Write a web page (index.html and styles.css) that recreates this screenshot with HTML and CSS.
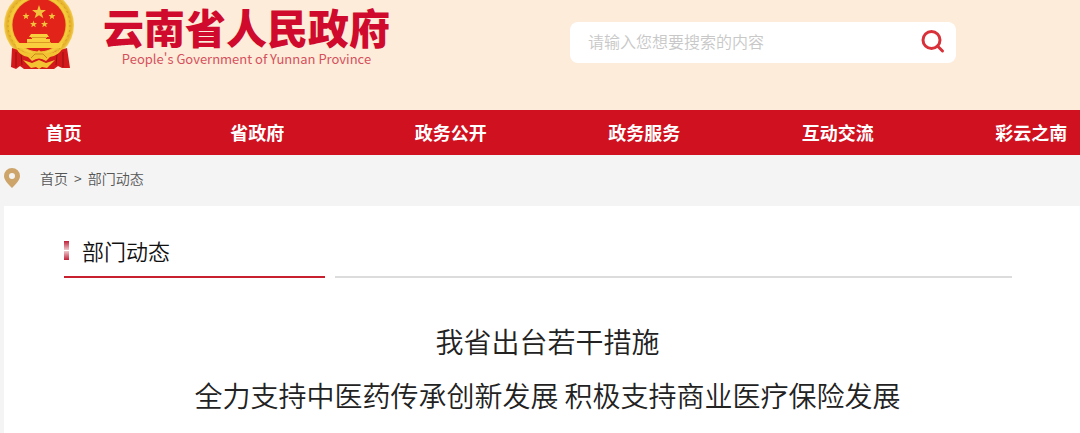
FILE: index.html
```html
<!DOCTYPE html>
<html lang="zh-CN">
<head>
  <meta charset="UTF-8">
  <title>云南省人民政府</title>
  <meta name="viewport" content="width=device-width,initial-scale=1">
  <link rel="stylesheet" href="styles.css">
</head>
<body>
  <header class="header">
    <a class="logo" href="#">
      <svg class="emblem" viewBox="0 0 72 78" aria-hidden="true">
        <defs>
          <radialGradient id="gold" cx="50%" cy="50%" r="50%">
            <stop offset="74%" stop-color="#d9a02a"/>
            <stop offset="80%" stop-color="#f7cf3c"/>
            <stop offset="92%" stop-color="#e6b12c"/>
            <stop offset="100%" stop-color="#f3cf52"/>
          </radialGradient>
        </defs>
        <!-- wreath and field -->
        <circle cx="35" cy="33" r="35" fill="url(#gold)"/>
        <circle cx="35" cy="33" r="31" fill="none" stroke="#d29a22" stroke-width="1" stroke-dasharray="2 3"/>
        <circle cx="35" cy="33" r="26.500" fill="#e2231a"/>
        <!-- stars -->
        <g fill="#f3c23c">
          <path d="M35 13 L36.700 18 L42 18 L37.800 21.200 L39.400 26.200 L35 23.200 L30.600 26.200 L32.200 21.200 L28 18 L33.300 18 Z"/>
          <path d="M22 20.500 L22.900 23 L25.500 23 L23.500 24.700 L24.200 27.200 L22 25.700 L19.800 27.200 L20.500 24.700 L18.500 23 L21.100 23 Z"/>
          <path d="M48 20.500 L48.900 23 L51.500 23 L49.500 24.700 L50.200 27.200 L48 25.700 L45.800 27.200 L46.500 24.700 L44.500 23 L47.100 23 Z"/>
          <path d="M29.500 28.500 L30.400 31 L33 31 L31 32.700 L31.700 35.200 L29.500 33.700 L27.300 35.200 L28 32.700 L26 31 L28.600 31 Z"/>
          <path d="M40.500 28.500 L41.400 31 L44 31 L42 32.700 L42.700 35.200 L40.500 33.700 L38.300 35.200 L39 32.700 L37 31 L39.600 31 Z"/>
        </g>
        <!-- gate -->
        <path fill="#f9cf3e" d="M27 42 H43 L45 45 H42 V47 H46 V51 H59 L57 56 H13 L11 51 H23 V47 H28 V45 H25 Z"/>
        <path stroke="#dc9a24" stroke-width="1" fill="none" d="M27 45.500 H43 M23 50.500 H47"/>
        <!-- ribbons -->
        <path fill="#d4191b" d="M8 56 L20 60 L30 66 H40 L50 60 L63 56 L66 76 L58 76 L54 74 L50 77 H20 L16 74 L12 77 L7 75 Z"/>
        <path stroke="#98100f" stroke-width="1" fill="none" d="M12 60 L12 75 M17 62 L18 73 M53 62 L52 73 M59 60 L59 75"/>
        <!-- gear and bow -->
        <path fill="#f2c233" d="M12 56 Q21 61 27 62 L30 59 L33 60 L35 58 L37 60 L40 59 L43 62 Q50 61 59 56 Q54 64 46 65 L42 69 Q35 64 28 69 L24 65 Q16 64 12 56 Z"/>
        <path stroke="#c8891b" stroke-width="1" fill="none" d="M27 66 L31 62 H39 L43 66"/>
        <path fill="#f2c233" d="M19 68 L28 71 L35 68 L42 71 L51 68 L46 73 L43 76 L38 75 L35 77 L32 75 L27 76 L24 73 Z"/>
      </svg>
      <span class="logo-text">
        <span class="logo-cn">云南省人民政府</span>
        <span class="logo-en">People's Government of Yunnan Province</span>
      </span>
    </a>
    <form class="search">
      <input class="search-input" type="text" aria-label="搜索" placeholder="请输入您想要搜索的内容">
      <button class="search-btn" type="submit" aria-label="搜索">
        <svg class="search-icon" viewBox="0 0 24 24" aria-hidden="true">
          <circle cx="10.500" cy="10" r="8.500"/>
          <path d="M16.500 16 L21.500 21"/>
        </svg>
      </button>
    </form>
  </header>

  <nav class="nav">
    <ul class="nav-list">
      <li><a href="#">首页</a></li>
      <li><a href="#">省政府</a></li>
      <li><a href="#">政务公开</a></li>
      <li><a href="#">政务服务</a></li>
      <li><a href="#">互动交流</a></li>
      <li><a href="#">彩云之南</a></li>
    </ul>
  </nav>

  <div class="crumbs">
    <svg class="pin" viewBox="0 0 16 20" aria-hidden="true">
      <path fill-rule="evenodd" d="M8 0 A8 8 0 0 1 16 8 C16 12 12 16 8 20 C4 16 0 12 0 8 A8 8 0 0 1 8 0 Z M8 5 A3 3 0 0 0 8 11 A3 3 0 0 0 8 5 Z"/>
    </svg>
    <a href="#">首页</a>
    <span class="sep">&gt;</span>
    <a href="#">部门动态</a>
  </div>

  <main class="panel">
    <div class="section-head">
      <h2 class="section-title">部门动态</h2>
      <div class="section-line"></div>
    </div>
    <h1 class="article-title">我省出台若干措施<br>全力支持中医药传承创新发展 积极支持商业医疗保险发展</h1>
  </main>
</body>
</html>
```
FILE: styles.css
```css
* { box-sizing: border-box; }
body {
  margin: 0;
  background: #f4f4f4;
  font-family: "Noto Sans CJK SC", sans-serif;
  color: #222;
}
a { color: inherit; text-decoration: none; }

.header {
  display: flex;
  align-items: flex-start;
  justify-content: space-between;
  height: 110px;
  padding-right: 124px;
  background: #fdecda;
}
.logo { display: flex; padding-left: 4px; }
.emblem { width: 72px; height: 78px; margin-top: -8px; }
.logo-text {
  display: flex;
  flex-direction: column;
  align-items: center;
  margin-left: 27px;
}
.logo-cn {
  font-size: 41px;
  font-weight: 900;
  line-height: 52px;
  color: #cf0a2c;
}
.logo-en { font-size: 13px; line-height: 14px; color: #d6505c; }

.search {
  display: flex;
  width: 386px;
  height: 41px;
  margin-top: 22px;
  background: #fff;
  border-radius: 8px;
}
.search-input {
  flex: 1;
  min-width: 0;
  padding: 0 18px 4px;
  border: 0;
  background: none;
  font-family: inherit;
  font-size: 16px;
  outline: none;
}
.search-input::placeholder { color: #c8c8c8; font-weight: 350; }
.search-btn {
  display: flex;
  align-items: center;
  padding: 0 11px 2px;
  border: 0;
  background: none;
  cursor: pointer;
}
.search-icon {
  width: 24px; height: 24px;
  fill: none;
  stroke: #d8313a;
  stroke-width: 3;
  stroke-linecap: round;
}

.nav { background: #d01120; overflow: hidden; }
.nav-list {
  display: grid;
  grid-template-columns: repeat(6, 1fr);
  width: 107.5%;
  margin: 0 0 0 -33px;
  padding: 0;
  list-style: none;
  text-align: center;
}
.nav-list a {
  display: block;
  font-size: 18px;
  font-weight: 700;
  line-height: 45px;
  color: #fff;
}

.crumbs {
  display: flex;
  align-items: center;
  height: 51px;
  padding: 0 4px 6px;
  font-size: 14px;
  font-weight: 350;
  color: #555;
}
.pin { width: 16px; height: 20px; margin-right: 20px; fill: #cda56a; }
.sep { margin: 0 6px; }

.panel {
  margin-left: 4px;
  padding: 26px 0 24px;
  background: #fff;
}
.section-head {
  display: flex;
  align-items: flex-end;
  gap: 10px;
  margin: 0 68px 0 60px;
}
.section-title {
  display: flex;
  align-items: center;
  width: 261px;
  margin: 0;
  padding-bottom: 8px;
  border-bottom: 2px solid #c8202f;
  font-size: 22px;
  font-weight: 350;
  line-height: 36px;
  color: #111;
}
.section-title::before {
  content: "";
  width: 5px; height: 19px;
  margin-right: 13px;
  background: linear-gradient(#c01f38, #ecc0c6 45%, #fff 50%, #ecc0c6 55%, #c01f38);
}
.section-line { flex: 1; border-bottom: 2px solid #dcdcdc; }
.article-title {
  margin: 36px 0 0;
  padding-left: 11px;
  font-size: 28px;
  font-weight: 350;
  line-height: 54px;
  text-align: center;
}
```
